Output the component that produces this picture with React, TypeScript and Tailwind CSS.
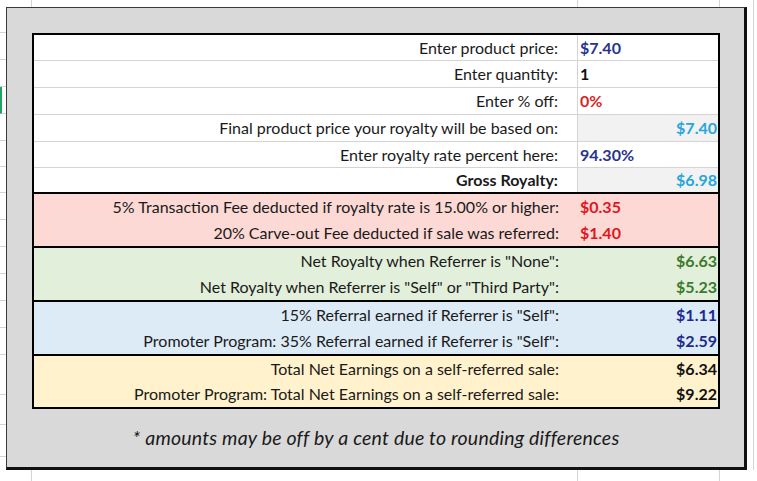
import React from "react";

type Row = {
  label: string;
  value: string;
  valueColor: string;
  align?: "left" | "right";
  boldLabel?: boolean;
  grayValue?: boolean;
  h: string;
  border: string;
};

const FONT = "font-['Lato','Liberation_Sans',sans-serif]";

const topRows: Row[] = [
  { label: "Enter product price:", value: "$7.40", valueColor: "text-[#27338e]", h: "h-[26px]", border: "border-b border-[#d4d4d4]" },
  { label: "Enter quantity:", value: "1", valueColor: "text-[#111111]", h: "h-[27px]", border: "border-b border-[#d4d4d4]" },
  { label: "Enter % off:", value: "0%", valueColor: "text-[#dc1f26]", h: "h-[27px]", border: "border-b border-[#d4d4d4]" },
  {
    label: "Final product price your royalty will be based on:",
    value: "$7.40",
    valueColor: "text-[#26a6dc]",
    align: "right",
    grayValue: true,
    h: "h-[27px]",
    border: "border-b border-[#d4d4d4]",
  },
  { label: "Enter royalty rate percent here:", value: "94.30%", valueColor: "text-[#27338e]", h: "h-[26px]", border: "border-b border-[#d4d4d4]" },
  {
    label: "Gross Royalty:",
    value: "$6.98",
    valueColor: "text-[#26a6dc]",
    align: "right",
    grayValue: true,
    boldLabel: true,
    h: "h-[26px]",
    border: "border-b-2 border-black",
  },
];

type Group = {
  bg: string;
  rows: { label: string; value: string }[];
  valueColor: string;
  align: "left" | "right";
  last?: boolean;
};

const groups: Group[] = [
  {
    bg: "bg-[#fcd9d5]",
    valueColor: "text-[#e0161e]",
    align: "left",
    rows: [
      { label: "5% Transaction Fee deducted if royalty rate is 15.00% or higher:", value: "$0.35" },
      { label: "20% Carve-out Fee deducted if sale was referred:", value: "$1.40" },
    ],
  },
  {
    bg: "bg-[#e2efda]",
    valueColor: "text-[#3b7a2a]",
    align: "right",
    rows: [
      { label: 'Net Royalty when Referrer is "None":', value: "$6.63" },
      { label: 'Net Royalty when Referrer is "Self" or "Third Party":', value: "$5.23" },
    ],
  },
  {
    bg: "bg-[#ddebf7]",
    valueColor: "text-[#1c2a8e]",
    align: "right",
    rows: [
      { label: '15% Referral earned if Referrer is "Self":', value: "$1.11" },
      { label: 'Promoter Program: 35% Referral earned if Referrer is "Self":', value: "$2.59" },
    ],
  },
  {
    bg: "bg-[#fff2cc]",
    valueColor: "text-[#111111]",
    align: "right",
    last: true,
    rows: [
      { label: "Total Net Earnings on a self-referred sale:", value: "$6.34" },
      { label: "Promoter Program: Total Net Earnings on a self-referred sale:", value: "$9.22" },
    ],
  },
];

const leftCells = [26, 27, 27, 27, 27, 26, 26, 27, 27, 27, 27, 27, 27, 40, 30, 32];

function TopRow({ row }: { row: Row }) {
  return (
    <div className={`flex shrink-0 ${row.h} ${row.border}`}>
      <div
        className={`flex w-[544px] items-center justify-end border-r border-[#d4d4d4] pr-[19px] text-[#1a1a1a] ${
          row.boldLabel ? "font-bold" : ""
        }`}
      >
        {row.label}
      </div>
      <div
        className={`flex flex-1 items-center font-bold ${row.valueColor} ${
          row.align === "right" ? "justify-end pr-px" : "pl-[2px]"
        } ${row.grayValue ? "bg-[#f2f2f2]" : ""}`}
      >
        {row.value}
      </div>
    </div>
  );
}

function ColorGroup({ group }: { group: Group }) {
  return (
    <div
      className={`flex flex-col ${group.bg} ${
        group.last ? "flex-1" : "h-[54px] shrink-0 border-b-2 border-black"
      }`}
    >
      {group.rows.map((r) => (
        <div key={r.label} className="flex flex-1 items-center">
          <div className="flex w-[544px] justify-end pr-[19px] text-[#1a1a1a]">{r.label}</div>
          <div
            className={`flex flex-1 font-bold ${group.valueColor} ${
              group.align === "right" ? "justify-end pr-px" : "pl-[2px]"
            }`}
          >
            {r.value}
          </div>
        </div>
      ))}
    </div>
  );
}

export default function App() {
  return (
    <div className={`flex h-[481px] w-[757px] flex-col overflow-hidden bg-white ${FONT} text-[16px] leading-none`}>
      {/* sheet header strip */}
      <div className="flex h-[7px] shrink-0 bg-white">
        <div className="w-[32px] border-r border-[#d4d4d4]" />
        <div className="w-[546px] border-r border-[#d4d4d4]" />
        <div className="w-[142px] border-r border-[#d4d4d4]" />
        <div className="w-[34px] border-r border-[#d4d4d4]" />
      </div>

      <div className="flex h-[463px] shrink-0">
        {/* row gridlines left of the panel */}
        <div className="flex w-[6px] shrink-0 flex-col">
          {leftCells.map((h, i) => (
            <div
              key={i}
              style={{ height: h }}
              className={`shrink-0 border-b border-[#d4d4d4] ${i === 3 ? "border-l-2 border-l-[#21a366]" : ""}`}
            />
          ))}
        </div>

        {/* gray panel */}
        <div className="flex w-[741px] shrink-0 flex-col border-t border-l border-r-[3px] border-b-[3px] border-t-[#3a3a3a] border-l-[#3a3a3a] border-r-[#111] border-b-[#111] bg-[#d9d9d9] pt-[25px] pl-[25px]">
          <div className="flex h-[376px] w-[688px] shrink-0 flex-col border-2 border-black bg-white">
            {topRows.map((r) => (
              <TopRow key={r.label} row={r} />
            ))}
            {groups.map((g, i) => (
              <ColorGroup key={i} group={g} />
            ))}
          </div>
          <div className="flex w-[688px] flex-1 items-center justify-center pb-px text-[19.5px] italic tracking-[0.2px] text-[#1a1a1a]">
            * amounts may be off by a cent due to rounding differences
          </div>
        </div>

        <div className="flex w-[10px] shrink-0">
          <div className="w-[7px] border-r border-[#d4d4d4]" />
        </div>
      </div>

      {/* sheet strip below the panel */}
      <div className="flex flex-1">
        <div className="w-[32px] border-r border-[#d4d4d4]" />
        <div className="w-[546px] border-r border-[#d4d4d4]" />
        <div className="w-[142px] border-r border-[#d4d4d4]" />
      </div>
    </div>
  );
}
